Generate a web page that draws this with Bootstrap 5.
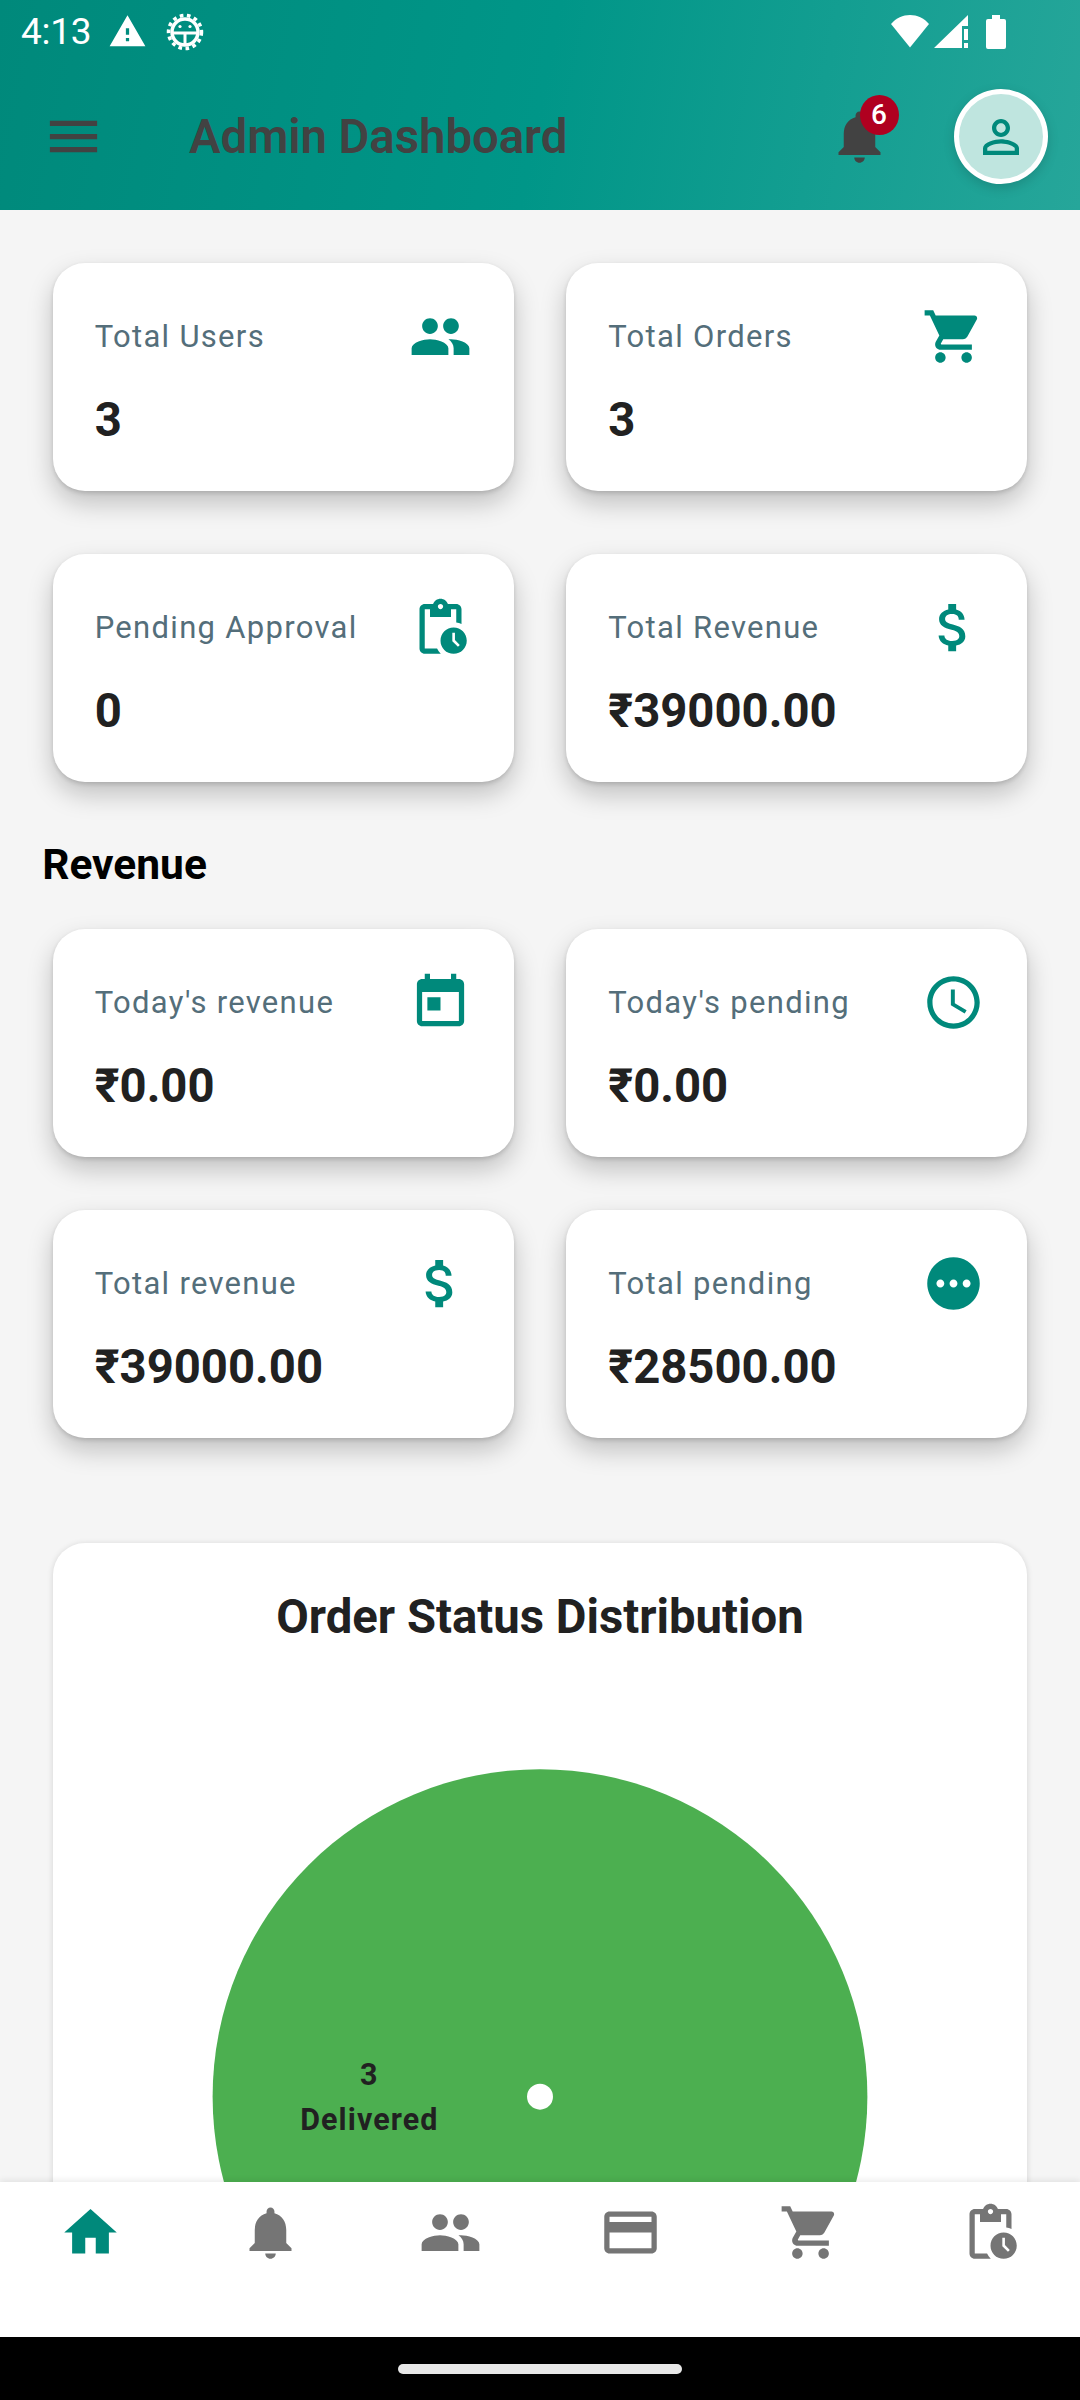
<!DOCTYPE html>
<html lang="en">
<head>
    <meta charset="UTF-8">
    <meta name="viewport" content="width=device-width, initial-scale=1.0">
    <title>Admin Dashboard</title>
    <link href="https://cdn.jsdelivr.net/npm/bootstrap@5.3.0/dist/css/bootstrap.min.css" rel="stylesheet">
    <style>
        body {
            background-color: #f5f5f5;
            font-family: Roboto, "Liberation Sans", sans-serif;
            overflow: hidden;
        }
        .app-shell {
            width: 1080px;
            height: 2400px;
        }
        .top-area {
            height: 210px;
            background: linear-gradient(101deg, #00897b, #009688 50%, #26a69a);
        }
        .status-row {
            height: 63px;
            color: #fff;
            font-size: 37px;
            padding-left: 21px;
        }
        .status-time { width: 86.5px; letter-spacing: -.3px; }
        .status-warn { width: 58px; }
        .status-right { margin-left: auto; margin-right: 74px; }
        .tool-row {
            height: 147px;
            padding-left: 42px;
            padding-right: 32px;
        }
        .tool-title {
            margin: 2px 0 0 84px;
            font-size: 47.25px;
            font-weight: 600;
            color: #424242;
        }
        .tool-bell {
            margin-left: auto;
            margin-right: 63px;
        }
        .bell-count {
            position: absolute;
            left: 31.5px;
            top: -10px;
            width: 39px;
            height: 40px;
            background-color: #b00020;
            color: #fff;
            font-size: 28px;
            font-weight: 500;
        }
        .avatar-ring {
            width: 94px;
            height: 95px;
            background-color: #bfe5df;
            border: 5px solid #fff;
            box-shadow: 0 4px 12px rgba(0, 0, 0, .15);
        }
        .page-body {
            flex: 1;
            min-height: 0;
            overflow: hidden;
            padding: 53px 52.7px 0;
        }
        .stat-row {
            --bs-gutter-x: 52.6px;
            --bs-gutter-y: 0;
        }
        .stat-tile {
            height: 228px;
            padding: 42px;
            border: 0;
            border-radius: 32px;
            box-shadow: 0 2px 4px rgba(0, 0, 0, .14), 0 12px 26px rgba(0, 0, 0, .22);
        }
        .stat-label {
            margin-top: 2px;
            font-size: 31px;
            letter-spacing: 1.3px;
            color: #546e7a;
        }
        .stat-value {
            margin-top: 25px;
            font-size: 47.25px;
            line-height: 55px;
            font-weight: 700;
            color: #212121;
        }
        .gap-first { margin-top: 63px; }
        .gap-second { margin-top: 53px; }
        .section-name {
            margin: 58px 0 39px -10.5px;
            font-size: 42.5px;
            line-height: 50px;
            font-weight: 700;
            color: #000;
        }
        .chart-tile {
            margin-top: 105px;
            height: 900px;
            padding-top: 46.5px;
            border: 0;
            border-radius: 32px;
            box-shadow: 0 1px 6px rgba(0, 0, 0, .14);
        }
        .chart-name {
            margin: 0;
            font-size: 47.25px;
            line-height: 55px;
            font-weight: 700;
            color: #212121;
        }
        .chart-label {
            font-family: Roboto, "Liberation Sans", sans-serif;
            font-size: 30.5px;
            font-weight: 700;
            fill: #212121;
            letter-spacing: 1.1px;
        }
        .bottom-tabs {
            height: 155px;
            padding-top: 19px;
            position: relative;
            background-color: #fff;
            box-shadow: 0 -2px 6px rgba(0, 0, 0, .08);
        }
        .bottom-tabs a { width: 180px; }
        .gesture-bar {
            height: 63px;
            background-color: #000;
        }
        .gesture-pill {
            width: 284px;
            height: 10px;
            border-radius: 5px;
            background-color: #e8e8e8;
        }
        .ic-teal { fill: #00897b; }
        .ic-gray { fill: #757575; }
        .ic-dark { fill: #424242; }
    </style>
</head>
<body>
    <svg width="0" height="0" class="position-absolute">
        <symbol id="i-home" viewBox="0 0 24 24"><path d="M10 20v-6h4v6h5v-8h3L12 3 2 12h3v8z"/></symbol>
        <symbol id="i-bell" viewBox="0 0 24 24"><path d="M12 22c1.1 0 2-.9 2-2h-4c0 1.1.89 2 2 2zm6-6v-5c0-3.07-1.64-5.64-4.5-6.32V4c0-.83-.67-1.5-1.5-1.5s-1.5.67-1.5 1.5v.68C7.63 5.36 6 7.92 6 11v5l-2 2v1h16v-1l-2-2z"/></symbol>
        <symbol id="i-people" viewBox="0 0 24 24"><path d="M16 11c1.66 0 2.99-1.34 2.99-3S17.66 5 16 5c-1.66 0-3 1.34-3 3s1.34 3 3 3zm-8 0c1.66 0 2.99-1.34 2.99-3S9.66 5 8 5C6.34 5 5 6.34 5 8s1.34 3 3 3zm0 2c-2.33 0-7 1.17-7 3.5V19h14v-2.5c0-2.33-4.67-3.5-7-3.5zm8 0c-.29 0-.62.02-.97.05 1.16.84 1.97 1.97 1.97 3.45V19h6v-2.5c0-2.33-4.67-3.5-7-3.5z"/></symbol>
        <symbol id="i-payment" viewBox="0 0 24 24"><path d="M20 4H4c-1.11 0-1.99.89-1.99 2L2 18c0 1.11.89 2 2 2h16c1.11 0 2-.89 2-2V6c0-1.11-.89-2-2-2zm0 14H4v-6h16v6zm0-10H4V6h16v2z"/></symbol>
        <symbol id="i-cart" viewBox="0 0 24 24"><path d="M7 18c-1.1 0-1.99.9-1.99 2S5.9 22 7 22s2-.9 2-2-.9-2-2-2zM1 2v2h2l3.6 7.59-1.35 2.45c-.16.28-.25.61-.25.96 0 1.1.9 2 2 2h12v-2H7.42c-.14 0-.25-.11-.25-.25l.03-.12.9-1.63h7.45c.75 0 1.41-.41 1.75-1.03l3.58-6.49c.08-.14.12-.31.12-.48 0-.55-.45-1-1-1H5.21l-.94-2H1zm16 16c-1.1 0-1.99.9-1.99 2s.89 2 1.99 2 2-.9 2-2-.9-2-2-2z"/></symbol>
        <symbol id="i-pending-actions" viewBox="0 0 24 24"><path d="M17 12c-2.76 0-5 2.24-5 5s2.24 5 5 5 5-2.24 5-5-2.24-5-5-5zm1.65 7.35L16.5 17.2V14h1v2.79l1.85 1.85-.7.71zM18 3h-3.18C14.4 1.84 13.3 1 12 1s-2.4.84-2.82 2H6c-1.1 0-2 .9-2 2v15c0 1.1.9 2 2 2h6.11c-.59-.57-1.07-1.25-1.42-2H6V5h2v3h8V5h2v5.08c.71.1 1.38.31 2 .6V5c0-1.1-.9-2-2-2zm-6 2c-.55 0-1-.45-1-1s.45-1 1-1 1 .45 1 1-.45 1-1 1z"/></symbol>
        <symbol id="i-money" viewBox="0 0 24 24"><path d="M11.8 10.9c-2.27-.59-3-1.2-3-2.15 0-1.09 1.01-1.85 2.7-1.85 1.78 0 2.44.85 2.5 2.1h2.21c-.07-1.72-1.12-3.3-3.21-3.81V3h-3v2.16c-1.94.42-3.5 1.68-3.5 3.61 0 2.31 1.91 3.46 4.7 4.13 2.5.6 3 1.48 3 2.41 0 .69-.49 1.79-2.7 1.79-2.06 0-2.87-.92-2.98-2.1h-2.2c.12 2.19 1.76 3.42 3.68 3.83V21h3v-2.15c1.95-.37 3.5-1.5 3.5-3.55 0-2.84-2.43-3.81-4.7-4.4z"/></symbol>
        <symbol id="i-today" viewBox="0 0 24 24"><path d="M19 3h-1V1h-2v2H8V1H6v2H5c-1.11 0-1.99.9-1.99 2L3 19c0 1.1.89 2 2 2h14c1.1 0 2-.9 2-2V5c0-1.1-.9-2-2-2zm0 16H5V8h14v11zM7 10h5v5H7z"/></symbol>
        <symbol id="i-clock" viewBox="0 0 24 24"><path d="M11.99 2C6.47 2 2 6.48 2 12s4.47 10 9.99 10C17.52 22 22 17.52 22 12S17.52 2 11.99 2zM12 20c-4.42 0-8-3.58-8-8s3.58-8 8-8 8 3.58 8 8-3.58 8-8 8zm.5-13H11v6l5.25 3.15.75-1.23-4.5-2.67z"/></symbol>
        <symbol id="i-pending" viewBox="0 0 24 24"><path d="M12 2C6.48 2 2 6.48 2 12c0 5.52 4.48 10 10 10s10-4.48 10-10C22 6.48 17.52 2 12 2zM7 13.5c-.83 0-1.5-.67-1.5-1.5s.67-1.5 1.5-1.5 1.5.67 1.5 1.5-.67 1.5-1.5 1.5zm5 0c-.83 0-1.5-.67-1.5-1.5s.67-1.5 1.5-1.5 1.5.67 1.5 1.5-.67 1.5-1.5 1.5zm5 0c-.83 0-1.5-.67-1.5-1.5s.67-1.5 1.5-1.5 1.5.67 1.5 1.5-.67 1.5-1.5 1.5z"/></symbol>
    </svg>

    <div class="app-shell d-flex flex-column">
        <header class="top-area">
            <div class="status-row d-flex align-items-center">
                <span class="status-time">4:13</span>
                <span class="status-warn d-flex">
                    <svg width="39" height="39" viewBox="0 0 24 24" fill="#fff"><path d="M1 21h22L12 2 1 21zm12-3h-2v-2h2v2zm0-4h-2v-4h2v4z"/></svg>
                </span>
                <svg width="38" height="38" viewBox="0 0 38 38" fill="none" stroke="#fff">
                    <circle cx="19" cy="19" r="16.5" stroke-width="3.5" stroke-dasharray="3.6 3.6"/>
                    <circle cx="19" cy="19" r="13" stroke-width="3.5"/>
                    <path d="M6 20h26M19 20v12" stroke-width="3"/>
                    <circle cx="14" cy="13.5" r="1.6" fill="#fff" stroke="none"/>
                    <circle cx="24" cy="13.5" r="1.6" fill="#fff" stroke="none"/>
                </svg>
                <div class="status-right d-flex align-items-center">
                    <svg width="40" height="33" viewBox="0 0 40 33" fill="#fff" class="me-1"><path d="M20 32.5 1 9C6 3 13 0 20 0s14 3 19 9z"/></svg>
                    <svg width="34" height="33" viewBox="0 0 34 33" fill="#fff"><path d="M34 0v11h-6v22H0z"/><path d="M30 14h4v11h-4zM30 28h4v5h-4z"/></svg>
                    <svg width="20" height="34" viewBox="0 0 20 34" fill="#fff" style="margin-left:18px"><path d="M6 0h8v4h4a2 2 0 0 1 2 2v26a2 2 0 0 1-2 2H2a2 2 0 0 1-2-2V6a2 2 0 0 1 2-2h4z"/></svg>
                </div>
            </div>
            <div class="tool-row d-flex align-items-center">
                <svg width="63" height="63" viewBox="0 0 24 24" class="ic-dark"><path d="M3 18h18v-2H3v2zm0-5h18v-2H3v2zm0-7v2h18V6H3z"/></svg>
                <h1 class="tool-title">Admin Dashboard</h1>
                <div class="tool-bell position-relative d-flex">
                    <svg width="63" height="63" class="ic-dark"><use href="#i-bell"/></svg>
                    <span class="bell-count rounded-circle d-flex align-items-center justify-content-center">6</span>
                </div>
                <div class="avatar-ring rounded-circle d-flex align-items-center justify-content-center">
                    <svg width="54" height="54" viewBox="0 0 24 24" class="ic-teal"><path d="M12 5.9c1.16 0 2.1.94 2.1 2.1s-.94 2.1-2.1 2.1S9.9 9.16 9.9 8s.94-2.1 2.1-2.1m0 9c2.97 0 6.1 1.46 6.1 2.1v1.1H5.9V17c0-.64 3.13-2.1 6.1-2.1M12 4C9.79 4 8 5.79 8 8s1.79 4 4 4 4-1.79 4-4-1.79-4-4-4zm0 9c-2.67 0-8 1.34-8 4v3h16v-3c0-2.66-5.33-4-8-4z"/></svg>
                </div>
            </div>
        </header>

        <main class="page-body">
            <div class="row stat-row">
                <div class="col-6">
                    <div class="card stat-tile">
                        <div class="d-flex justify-content-between align-items-center">
                            <span class="stat-label">Total Users</span>
                            <svg width="63" height="63" class="ic-teal"><use href="#i-people"/></svg>
                        </div>
                        <div class="stat-value">3</div>
                    </div>
                </div>
                <div class="col-6">
                    <div class="card stat-tile">
                        <div class="d-flex justify-content-between align-items-center">
                            <span class="stat-label">Total Orders</span>
                            <svg width="63" height="63" class="ic-teal"><use href="#i-cart"/></svg>
                        </div>
                        <div class="stat-value">3</div>
                    </div>
                </div>
            </div>
            <div class="row stat-row gap-first">
                <div class="col-6">
                    <div class="card stat-tile">
                        <div class="d-flex justify-content-between align-items-center">
                            <span class="stat-label">Pending Approval</span>
                            <svg width="63" height="63" class="ic-teal"><use href="#i-pending-actions"/></svg>
                        </div>
                        <div class="stat-value">0</div>
                    </div>
                </div>
                <div class="col-6">
                    <div class="card stat-tile">
                        <div class="d-flex justify-content-between align-items-center">
                            <span class="stat-label">Total Revenue</span>
                            <svg width="63" height="63" class="ic-teal"><use href="#i-money"/></svg>
                        </div>
                        <div class="stat-value">₹39000.00</div>
                    </div>
                </div>
            </div>

            <h2 class="section-name">Revenue</h2>

            <div class="row stat-row">
                <div class="col-6">
                    <div class="card stat-tile">
                        <div class="d-flex justify-content-between align-items-center">
                            <span class="stat-label">Today's revenue</span>
                            <svg width="63" height="63" class="ic-teal"><use href="#i-today"/></svg>
                        </div>
                        <div class="stat-value">₹0.00</div>
                    </div>
                </div>
                <div class="col-6">
                    <div class="card stat-tile">
                        <div class="d-flex justify-content-between align-items-center">
                            <span class="stat-label">Today's pending</span>
                            <svg width="63" height="63" class="ic-teal"><use href="#i-clock"/></svg>
                        </div>
                        <div class="stat-value">₹0.00</div>
                    </div>
                </div>
            </div>
            <div class="row stat-row gap-second">
                <div class="col-6">
                    <div class="card stat-tile">
                        <div class="d-flex justify-content-between align-items-center">
                            <span class="stat-label">Total revenue</span>
                            <svg width="63" height="63" class="ic-teal"><use href="#i-money"/></svg>
                        </div>
                        <div class="stat-value">₹39000.00</div>
                    </div>
                </div>
                <div class="col-6">
                    <div class="card stat-tile">
                        <div class="d-flex justify-content-between align-items-center">
                            <span class="stat-label">Total pending</span>
                            <svg width="63" height="63" class="ic-teal"><use href="#i-pending"/></svg>
                        </div>
                        <div class="stat-value">₹28500.00</div>
                    </div>
                </div>
            </div>

            <div class="card chart-tile">
                <h3 class="chart-name text-center">Order Status Distribution</h3>
                <svg width="974" height="800" viewBox="0 0 974 800" class="d-block">
                    <circle cx="487" cy="452.5" r="328" fill="#4caf50"/>
                    <circle cx="487" cy="452.5" r="13" fill="#fff"/>
                    <text x="316" y="440.5" text-anchor="middle" class="chart-label">3</text>
                    <text x="316" y="485.5" text-anchor="middle" class="chart-label">Delivered</text>
                </svg>
            </div>
        </main>

        <nav class="bottom-tabs d-flex">
            <a href="#" class="d-flex justify-content-center"><svg width="63" height="63" class="ic-teal"><use href="#i-home"/></svg></a>
            <a href="#" class="d-flex justify-content-center"><svg width="63" height="63" class="ic-gray"><use href="#i-bell"/></svg></a>
            <a href="#" class="d-flex justify-content-center"><svg width="63" height="63" class="ic-gray"><use href="#i-people"/></svg></a>
            <a href="#" class="d-flex justify-content-center"><svg width="63" height="63" class="ic-gray"><use href="#i-payment"/></svg></a>
            <a href="#" class="d-flex justify-content-center"><svg width="63" height="63" class="ic-gray"><use href="#i-cart"/></svg></a>
            <a href="#" class="d-flex justify-content-center"><svg width="63" height="63" class="ic-gray"><use href="#i-pending-actions"/></svg></a>
        </nav>
        <div class="gesture-bar d-flex align-items-center justify-content-center">
            <div class="gesture-pill"></div>
        </div>
    </div>

    <script src="https://cdn.jsdelivr.net/npm/bootstrap@5.3.0/dist/js/bootstrap.bundle.min.js"></script>
</body>
</html>
